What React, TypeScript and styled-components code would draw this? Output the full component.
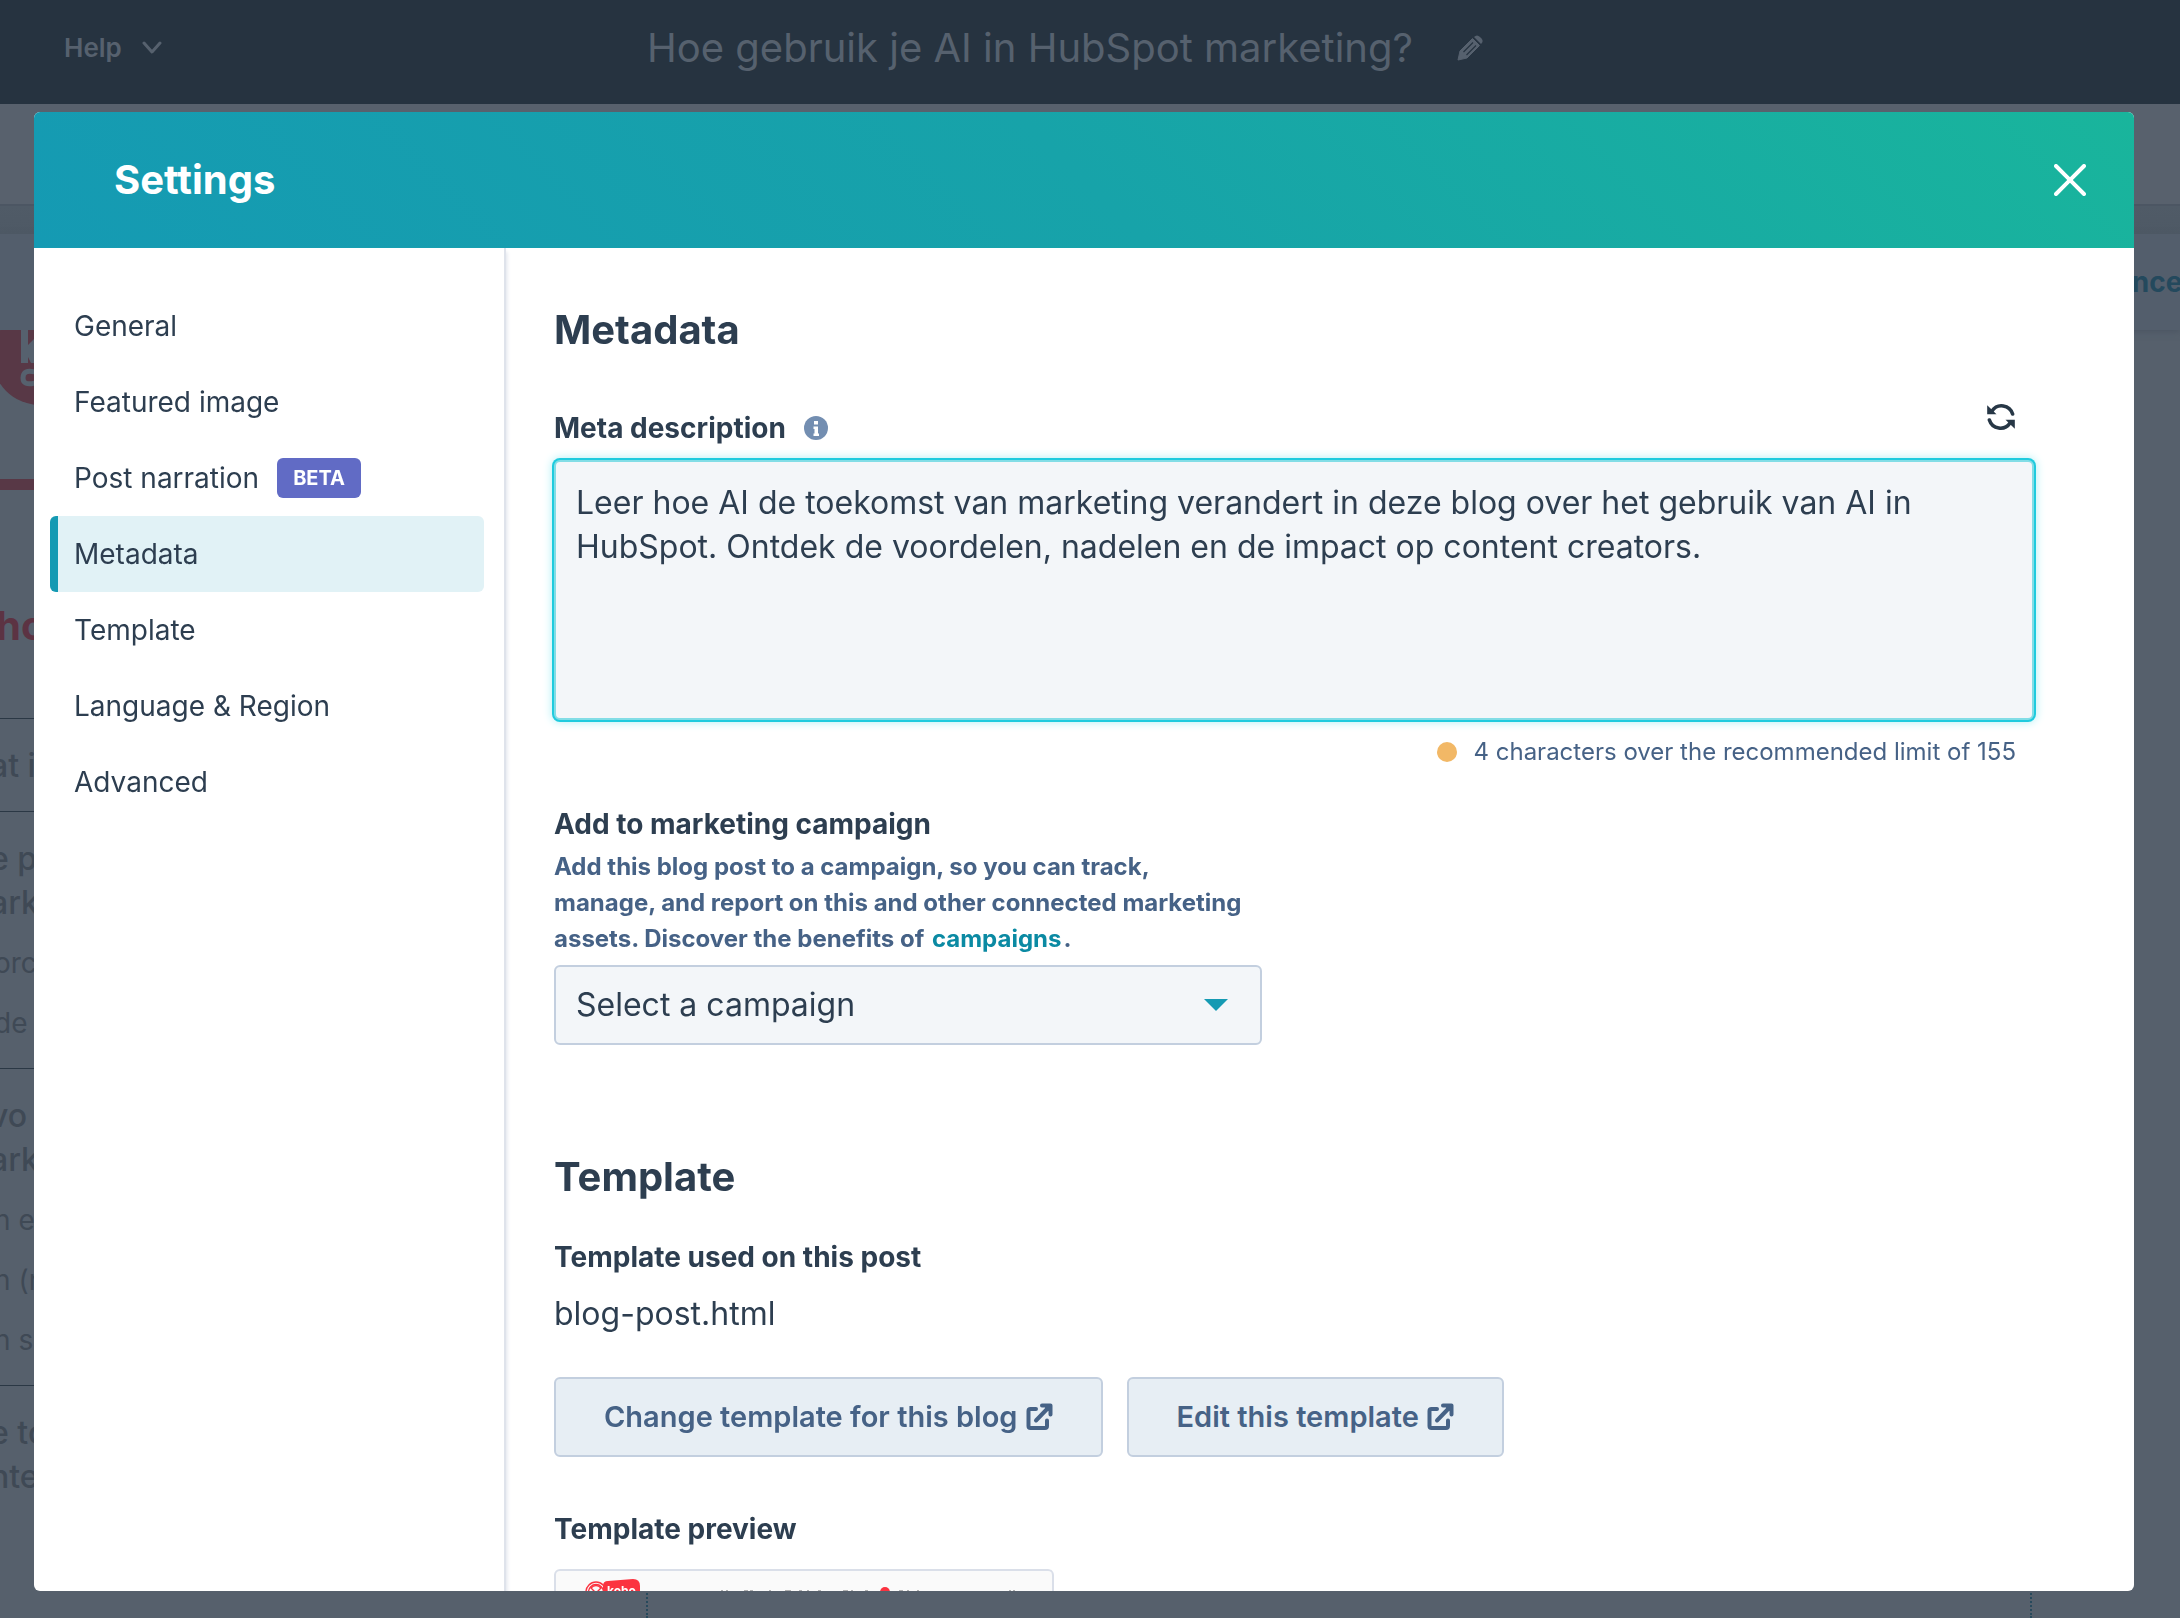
import React from "react";
import styled, { createGlobalStyle } from "styled-components";

const ink = "#2d3e50";
const slate = "#466286";
const fieldBg = "#f3f6f9";
const fieldBorder = "#c3cfdf";

const GlobalStyle = createGlobalStyle`
  *, *::before, *::after { box-sizing: border-box; }
  body {
    margin: 0;
    background: #56606c;
    color: ${ink};
    font-family: Inter, "Open Sans", "Liberation Sans", sans-serif;
    font-size: 32px;
    line-height: 44px;
  }
  h1, h2, h3, p { margin: 0; }
  button, textarea, select { font: inherit; color: inherit; }
`;

/* ---------- page behind the dialog ---------- */

const Page = styled.div`
  display: flex;
  flex-direction: column;
  height: 100vh;
  overflow: hidden;
`;

const TopBar = styled.header`
  display: grid;
  grid-template-columns: 1fr auto 1fr;
  align-items: center;
  flex: none;
  height: 104px;
  padding: 0 114px 8px 64px;
  background: #263340;
  color: #56616e;
`;

const HelpButton = styled.button`
  display: flex;
  align-items: center;
  gap: 20px;
  justify-self: start;
  padding: 0;
  border: 0;
  background: none;
  font-size: 26px;
  font-weight: 600;
`;

const PostTitle = styled.div`
  display: flex;
  align-items: center;
  gap: 44px;
  font-size: 40px;
  white-space: nowrap;
`;

const IconButton = styled.button`
  display: flex;
  padding: 0;
  border: 0;
  background: none;
`;

const Toolbar = styled.div`
  flex: none;
  height: 102px;
  border-bottom: 2px solid #4c5663;
  background: #58616d;
`;

const Divider = styled.div`
  flex: none;
  height: 28px;
  background: linear-gradient(#505b67, #4e5965);
`;

const SubBar = styled.div`
  display: flex;
  flex: none;
  align-items: center;
  justify-content: flex-end;
  height: 96px;
  background: #535e6c;
  box-shadow: 0 2px 6px #4c5663;
`;

const SubBarLink = styled.a`
  margin-right: -20px;
  color: #24495d;
  font-size: 28px;
  font-weight: 700;
  text-decoration: none;
`;

const Canvas = styled.div`
  display: flex;
  flex: 1;
  min-height: 0;
`;

const Outline = styled.div`
  flex: none;
  width: 34px;
  overflow: hidden;
  color: #3f4955;
  white-space: nowrap;
`;

const BrandMark = styled.svg`
  display: block;
  width: 34px;
  height: 76px;
`;

const BrandRule = styled.div`
  height: 11px;
  margin-top: 73px;
  background: #583846;
`;

const OutlineTitle = styled.div`
  margin: 114px 0 70px;
  color: #5c3343;
  font-size: 40px;
  font-weight: 700;
  text-indent: -4px;
`;

const OutlineGroup = styled.div`
  padding: 25px 0 23px;
  border-top: 1px solid #2b3845;
`;

const OutlineHeading = styled.div`
  font-weight: 500;
  text-indent: -10px;
`;

const OutlineItem = styled.div`
  padding-top: 16px;
  font-size: 28px;
  text-indent: -6px;
`;

const DropZone = styled.div`
  flex: 1;
  margin: 0 148px 0 612px;
  border: 2px dotted #27495c;
  border-width: 0 2px;
`;

/* ---------- dialog ---------- */

const Dialog = styled.section`
  position: fixed;
  inset: 112px 46px 27px 34px;
  display: flex;
  flex-direction: column;
  overflow: hidden;
  border-radius: 6px;
  background: #fff;
`;

const DialogHeader = styled.header`
  display: flex;
  flex: none;
  align-items: center;
  justify-content: space-between;
  height: 136px;
  padding: 0 48px 0 80px;
  background: linear-gradient(45deg, #159ab3, #17a3a9 50%, #19b59c);
  color: #fff;
`;

const DialogTitle = styled.h1`
  font-size: 40px;
  font-weight: 700;
`;

const DialogBody = styled.div`
  display: flex;
  flex: 1;
  min-height: 0;
`;

const Sidebar = styled.nav`
  flex: none;
  width: 472px;
  padding: 40px 20px 0 16px;
  border-right: 2px solid #dfe3eb;
  box-shadow: 1px 4px 4px #dfe3eb;
`;

const NavItem = styled.a<{ $active?: boolean }>`
  display: flex;
  align-items: center;
  gap: 18px;
  height: 76px;
  padding-left: 16px;
  border-left: 8px solid ${(p) => (p.$active ? "#159ab3" : "transparent")};
  border-radius: 6px;
  background: ${(p) => (p.$active ? "#e1f2f6" : "none")};
  color: ${ink};
  font-size: 28px;
  text-decoration: none;
`;

const Badge = styled.span`
  padding: 0 16px;
  border-radius: 6px;
  background: #616bc5;
  color: #fff;
  font-size: 20px;
  font-weight: 700;
  line-height: 40px;
`;

const Content = styled.main`
  flex: 1;
  min-width: 0;
  overflow: hidden;
  padding: 56px 100px 0 48px;
`;

const SectionTitle = styled.h2`
  font-size: 40px;
  font-weight: 700;
  line-height: 52px;
`;

const LabelRow = styled.div`
  display: flex;
  align-items: flex-start;
  justify-content: space-between;
  min-height: 46px;
  margin: 44px 0 14px;
  padding-right: 16px;
`;

const LabelGroup = styled.div`
  display: flex;
  align-items: center;
  align-self: flex-end;
  gap: 18px;
`;

const FieldLabel = styled.label`
  display: block;
  font-size: 28px;
  font-weight: 700;
  line-height: 36px;
`;

const RefreshButton = styled(IconButton)`
  padding: 3px;
  color: #273746;
`;

const Description = styled.textarea`
  display: block;
  width: 100%;
  height: 260px;
  padding: 19px 20px;
  border: 2px solid #82dde6;
  border-radius: 6px;
  outline: none;
  background: ${fieldBg};
  box-shadow: 0 0 0 2px #1fcbde, 0 0 10px 2px #aeeff5;
  resize: none;
`;

const Hint = styled.p`
  display: flex;
  align-items: center;
  justify-content: flex-end;
  gap: 16px;
  margin: 14px 18px 36px 0;
  color: ${slate};
  font-size: 24px;
  line-height: 36px;
`;

const Dot = styled.span`
  width: 20px;
  height: 20px;
  border-radius: 50%;
  background: #f2b866;
`;

const Campaign = styled.div`
  max-width: 708px;
  margin-bottom: 106px;
`;

const HelpText = styled.p`
  margin: 7px 0 8px;
  padding-right: 12px;
  color: ${slate};
  font-size: 24px;
  font-weight: 700;
  line-height: 36px;
`;

const InlineLink = styled.a`
  padding: 0 2px;
  color: #0b8aa3;
  text-decoration: none;
`;

const SelectBox = styled.div`
  display: grid;
  align-items: center;

  > * { grid-area: 1 / 1; }
  > svg {
    justify-self: end;
    margin-right: 34px;
    pointer-events: none;
  }
`;

const CampaignSelect = styled.select`
  width: 100%;
  height: 80px;
  padding: 0 64px 0 20px;
  border: 2px solid ${fieldBorder};
  border-radius: 6px;
  background: ${fieldBg};
  appearance: none;
`;

const SubTitle = styled.h3`
  font-size: 28px;
  font-weight: 700;
  line-height: 36px;
`;

const TemplateInfo = styled.div`
  display: grid;
  gap: 17px;
  margin: 36px 0 41px;
`;

const Actions = styled.div`
  display: flex;
  gap: 24px;
  margin-bottom: 54px;
`;

const ActionButton = styled.button`
  display: flex;
  align-items: center;
  gap: 8px;
  height: 80px;
  padding: 0 48px;
  border: 2px solid ${fieldBorder};
  border-radius: 6px;
  background: #e7eef4;
  color: ${slate};
  font-size: 29px;
  font-weight: 600;
  white-space: nowrap;
`;

const Preview = styled.div`
  width: 500px;
  height: 320px;
  margin-top: 22px;
  border: 2px solid #dadfe9;
  border-radius: 6px;
  background: #fafafa;
`;

const ExternalIcon = () => (
  <svg width="27" height="28" viewBox="0 0 27 28" fill="none" stroke="currentColor" strokeWidth="4" strokeLinecap="round" strokeLinejoin="round" aria-hidden="true">
    <path d="M10 6H4.500Q2.500 6 2.500 8V23Q2.500 25 4.500 25H19Q21 25 21 23V17.500" />
    <path d="M10 17.500L23 4" />
    <path d="M16 2.500H24.500V11.500" />
    <path d="M19 3.500H24V8.500Z" fill="currentColor" strokeWidth="1" />
  </svg>
);

const navItems = [
  { label: "General" },
  { label: "Featured image" },
  { label: "Post narration", badge: "BETA" },
  { label: "Metadata", active: true },
  { label: "Template" },
  { label: "Language & Region" },
  { label: "Advanced" },
];

const outline = [
  { heading: ["at i"], items: [] as string[] },
  { heading: ["e pr", "ark"], items: ["orc", "de"] },
  { heading: ["vo", "ark"], items: ["n e", "n (r", "n se"] },
  { heading: ["e to", "nte"], items: [] as string[] },
];

/* x and width of the words in the preview's tiny menu */
const previewNav = [
  [165, 2], [170, 2], [188, 4], [194, 3], [213, 2], [229, 6], [243, 3], [251, 2], [262, 3],
  [287, 5], [295, 2], [309, 3], [343, 4], [351, 2], [361, 2], [453, 2], [457, 2],
];

export default function App() {
  return (
    <>
      <GlobalStyle />
      <Page>
        <TopBar>
          <HelpButton type="button">
            Help
            <svg width="20" height="14" viewBox="0 0 20 14" fill="none" stroke="currentColor" strokeWidth="3" strokeLinecap="round" strokeLinejoin="round" aria-hidden="true">
              <path d="M2 2L10 11L18 2" />
            </svg>
          </HelpButton>
          <PostTitle>
            Hoe gebruik je AI in HubSpot marketing?
            <IconButton type="button" aria-label="Edit title">
              <svg width="26" height="26" viewBox="0 0 26 26" aria-hidden="true">
                <path d="M1 25L3 16L15.500 3.500L22.500 10.500L10 23Z" fill="#56616e" stroke="#56616e" strokeLinejoin="round" />
                <path d="M17 2Q20 -1 23 2L24.500 3.500Q27 6 24 9Z" fill="#56616e" />
                <path d="M6.500 17L16 7.500M9.500 20L19 10.500" stroke="#263340" strokeWidth="1.200" />
              </svg>
            </IconButton>
          </PostTitle>
        </TopBar>
        <Toolbar />
        <Divider />
        <SubBar>
          <SubBarLink href="#advanced">Advanced</SubBarLink>
        </SubBar>
        <Canvas>
          <Outline>
            <BrandMark viewBox="0 0 34 76" aria-hidden="true">
              <circle cx="40" cy="27" r="48" fill="#583846" />
              <path d="M21 0H28V15L34 9V33H31L28 27V33H21Z" fill="#56616e" />
              <path d="M35 42Q23 39 23 48Q23 56 35 53" fill="none" stroke="#56616e" strokeWidth="5" />
            </BrandMark>
            <BrandRule />
            <OutlineTitle>ho</OutlineTitle>
            {outline.map((group, i) => (
              <OutlineGroup key={i}>
                {group.heading.map((line) => (
                  <OutlineHeading key={line}>{line}</OutlineHeading>
                ))}
                {group.items.map((line) => (
                  <OutlineItem key={line}>{line}</OutlineItem>
                ))}
              </OutlineGroup>
            ))}
          </Outline>
          <DropZone />
        </Canvas>
      </Page>

      <Dialog role="dialog" aria-labelledby="dialog-title">
        <DialogHeader>
          <DialogTitle id="dialog-title">Settings</DialogTitle>
          <IconButton type="button" aria-label="Close">
            <svg width="32" height="32" viewBox="0 0 32 32" fill="none" stroke="#fff" strokeWidth="4" strokeLinecap="round" aria-hidden="true">
              <path d="M2 2L30 30M30 2L2 30" />
            </svg>
          </IconButton>
        </DialogHeader>
        <DialogBody>
          <Sidebar>
            {navItems.map((item) => (
              <NavItem key={item.label} href="#settings" $active={item.active}>
                {item.label}
                {item.badge && <Badge>{item.badge}</Badge>}
              </NavItem>
            ))}
          </Sidebar>
          <Content>
            <SectionTitle>Metadata</SectionTitle>
            <LabelRow>
              <LabelGroup>
                <FieldLabel htmlFor="meta-description">Meta description</FieldLabel>
                <svg width="24" height="24" viewBox="0 0 24 24" aria-hidden="true">
                  <circle cx="12" cy="12" r="12" fill="#738eb1" />
                  <path d="M10 5H14V8.500H10ZM9.500 10.500H14V17.500H15V20H9.500V17.500H10.500V13H9.500Z" fill="#fff" />
                </svg>
              </LabelGroup>
              <RefreshButton type="button" aria-label="Regenerate description">
                <svg width="28" height="28" viewBox="0 0 28 28" fill="none" stroke="currentColor" strokeWidth="3.600" strokeLinecap="round" aria-hidden="true">
                  <path d="M5 8A11.500 11.500 0 0 1 25.600 11" />
                  <path d="M23 20A11.500 11.500 0 0 1 2.400 17" />
                  <path d="M0.200 2.200L9.500 11.300H0.200Z" fill="currentColor" stroke="none" />
                  <path d="M27.800 25.800L18.500 16.700H27.800Z" fill="currentColor" stroke="none" />
                </svg>
              </RefreshButton>
            </LabelRow>
            <Description
              id="meta-description"
              defaultValue="Leer hoe AI de toekomst van marketing verandert in deze blog over het gebruik van AI in HubSpot. Ontdek de voordelen, nadelen en de impact op content creators."
            />
            <Hint>
              <Dot />
              4 characters over the recommended limit of 155
            </Hint>
            <Campaign>
              <FieldLabel htmlFor="campaign">Add to marketing campaign</FieldLabel>
              <HelpText>
                Add this blog post to a campaign, so you can track, manage, and report on this and other
                connected marketing assets. Discover the benefits of{" "}
                <InlineLink href="#campaigns">campaigns</InlineLink>.
              </HelpText>
              <SelectBox>
                <CampaignSelect id="campaign">
                  <option>Select a campaign</option>
                </CampaignSelect>
                <svg width="24" height="12" viewBox="0 0 24 12" aria-hidden="true">
                  <path d="M0 0H24L12 12Z" fill="#159ab3" />
                </svg>
              </SelectBox>
            </Campaign>
            <SectionTitle>Template</SectionTitle>
            <TemplateInfo>
              <SubTitle>Template used on this post</SubTitle>
              <p>blog-post.html</p>
            </TemplateInfo>
            <Actions>
              <ActionButton type="button">
                Change template for this blog
                <ExternalIcon />
              </ActionButton>
              <ActionButton type="button">
                Edit this template
                <ExternalIcon />
              </ActionButton>
            </Actions>
            <SubTitle>Template preview</SubTitle>
            <Preview>
              <svg width="496" height="60" viewBox="0 0 496 60" role="img" aria-label="Template preview">
                <g fill="none" stroke="#fb3340" strokeWidth="1.400">
                  <circle cx="40" cy="21" r="10" />
                  <circle cx="40" cy="21" r="7.500" />
                  <path d="M35 17L40 22L45 17Q40 12 35 17Z" />
                </g>
                <path d="M47 15Q47 10 52 10L77 8Q84 8 84 15V30H47Z" fill="#fb3340" />
                <text x="51" y="24" fill="#fff" fontSize="12" fontWeight="700">kobo</text>
                {previewNav.map(([x, w]) => (
                  <rect key={x} x={x} y="19" width={w} height="4" fill="#b0b0b0" />
                ))}
                <circle cx="329" cy="21" r="5" fill="#fb3340" />
              </svg>
            </Preview>
          </Content>
        </DialogBody>
      </Dialog>
    </>
  );
}
